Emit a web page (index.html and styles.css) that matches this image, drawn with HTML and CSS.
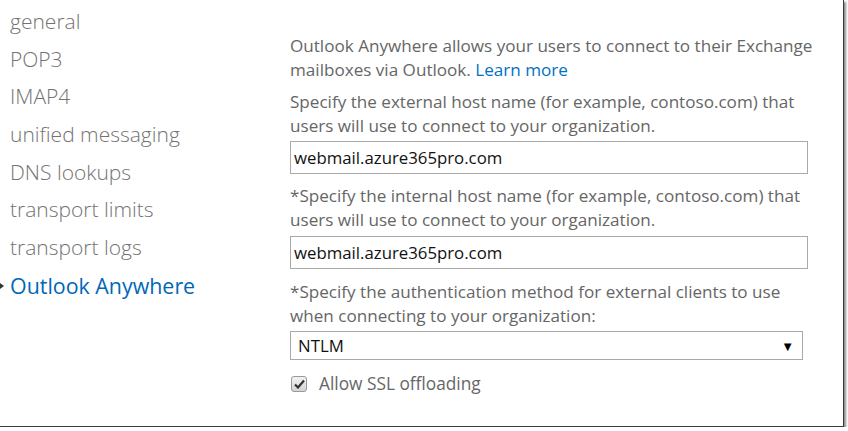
FILE: index.html
```html
<!DOCTYPE html>
<html>
<head>
<meta charset="utf-8">
<link rel="stylesheet" href="styles.css">
</head>
<body>
<div class="frame">
  <nav class="nav">
    <div class="nav-item">general</div>
    <div class="nav-item">POP3</div>
    <div class="nav-item">IMAP4</div>
    <div class="nav-item">unified messaging</div>
    <div class="nav-item">DNS lookups</div>
    <div class="nav-item">transport limits</div>
    <div class="nav-item">transport logs</div>
    <div class="nav-item active"><span class="pointer"></span>Outlook Anywhere</div>
  </nav>
  <main class="content">
    <p class="intro">Outlook Anywhere allows your users to connect to their Exchange<br>mailboxes via Outlook. <a class="link" href="#">Learn more</a></p>
    <label class="label">Specify the external host name (for example, contoso.com) that<br>users will use to connect to your organization.</label>
    <div class="field f1">webmail.azure365pro.com</div>
    <label class="label">*Specify the internal host name (for example, contoso.com) that<br>users will use to connect to your organization.</label>
    <div class="field f2">webmail.azure365pro.com</div>
    <label class="label">*Specify the authentication method for external clients to use<br>when connecting to your organization:</label>
    <div class="select"><span>NTLM</span><span class="arrow">&#9660;</span></div>
    <div class="check-row">
      <span class="checkbox"><svg width="11" height="10" viewBox="0 0 11 10"><path d="M1 5.5 L4 8.5 L10 1.5" fill="none" stroke="#333" stroke-width="2.2"/></svg></span>
      <span class="check-label">Allow SSL offloading</span>
    </div>
  </main>
</div>
</body>
</html>
```
FILE: styles.css
```css
html, body {
  margin: 0;
  padding: 0;
  background: #fff;
}
.frame {
  width: 844px;
  height: 427px;
  box-sizing: border-box;
  border-right: 1px solid #3a3a3a;
  border-bottom: 1px solid #3a3a3a;
  box-shadow: 2px 2px 2px rgba(0,0,0,0.45);
  display: flex;
  font-family: "Open Sans", "Noto Sans", sans-serif;
  overflow: hidden;
}
.nav {
  width: 290px;
  flex: none;
  padding-top: 3px;
  box-sizing: border-box;
}
.nav-item {
  position: relative;
  height: 37.7px;
  line-height: 37.7px;
  padding-left: 10px;
  font-size: 21px;
  font-weight: 300;
  color: #737373;
  white-space: nowrap;
}
.nav-item.active {
  color: #0067b8;
  font-weight: 400;
  font-size: 21.4px;
}
.pointer {
  position: absolute;
  left: 0;
  top: 16px;
  width: 0;
  height: 0;
  border-top: 3px solid transparent;
  border-bottom: 3px solid transparent;
  border-left: 4px solid #333;
}
.content {
  flex: 1;
  padding-top: 34px;
  font-size: 17.1px;
  color: #666;
  line-height: 24px;
  white-space: nowrap;
}
.intro {
  margin: 0 0 8px 0;
}
.link {
  color: #0072c6;
  text-decoration: none;
}
.label {
  display: block;
}
.field {
  box-sizing: border-box;
  width: 518px;
  height: 33px;
  border: 1px solid #aaa;
  padding-left: 3px;
  line-height: 31px;
  color: #111;
  font-size: 16.8px;
}
.f1 { margin-top: 3px; margin-bottom: 10px; }
.f2 { margin-top: 4px; margin-bottom: 11px; }
.select {
  margin-top: 3px;
  box-sizing: border-box;
  width: 513px;
  height: 29px;
  border: 1px solid #aaa;
  padding: 0 8px 0 7px;
  display: flex;
  justify-content: space-between;
  align-items: center;
  color: #111;
  font-size: 16.8px;
}
.arrow {
  font-size: 13px;
  color: #000;
}
.check-row {
  margin-top: 12px;
  display: flex;
  align-items: center;
  gap: 12px;
  padding-left: 1px;
}
.checkbox {
  width: 14px;
  height: 14px;
  border: 1px solid #999;
  border-radius: 3px;
  background: linear-gradient(#f2f2f2, #d4d4d4);
  display: flex;
  align-items: center;
  justify-content: center;
}
.check-label {
  font-size: 17.3px;
}
```
